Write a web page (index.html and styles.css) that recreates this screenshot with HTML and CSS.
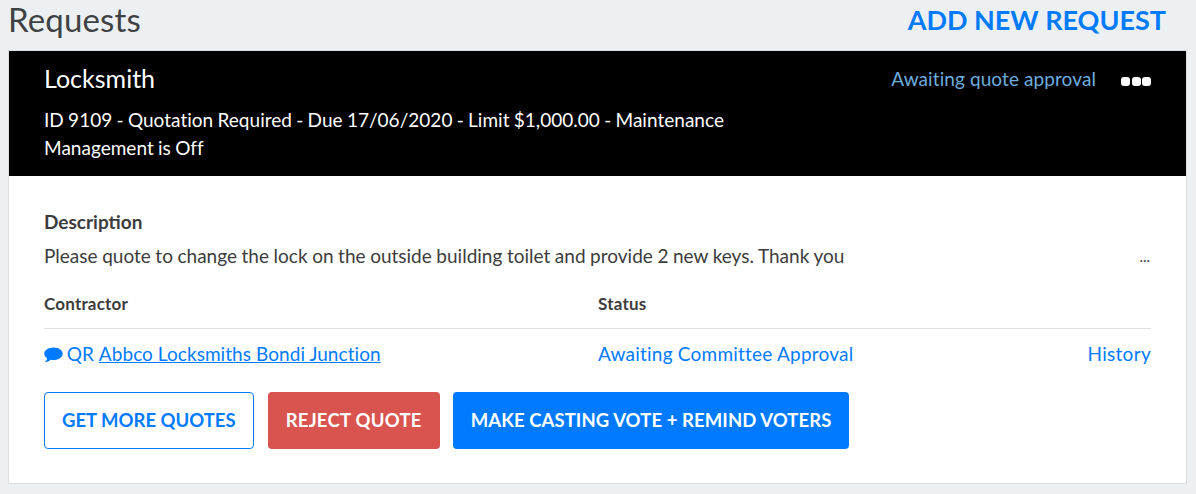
FILE: index.html
```html
<!DOCTYPE html>
<html lang="en">
<head>
<meta charset="utf-8">
<title>Requests</title>
<link rel="stylesheet" href="styles.css">
</head>
<body>
<header class="page-head">
  <h1 class="page-title">Requests</h1>
  <a class="add-link" href="#">ADD NEW REQUEST</a>
</header>
<section class="card">
  <div class="card-head">
    <div class="head-main">
      <h2 class="job-title">Locksmith</h2>
      <p class="job-meta">ID 9109 - Quotation Required - Due 17/06/2020 - Limit $1,000.00 - Maintenance Management is Off</p>
    </div>
    <div class="head-side">
      <span class="head-status">Awaiting quote approval</span>
      <span class="dots"><i></i><i></i><i></i></span>
    </div>
  </div>
  <div class="card-body">
    <h3 class="desc-title">Description</h3>
    <div class="desc-row">
      <p class="desc-text">Please quote to change the lock on the outside building toilet and provide 2 new keys. Thank you</p>
      <span class="more">...</span>
    </div>
    <div class="table-head">
      <span class="col-a">Contractor</span>
      <span class="col-b">Status</span>
    </div>
    <div class="table-row">
      <span class="col-a contractor">
        <svg class="chat" viewBox="0 0 20 16" aria-hidden="true"><path d="M10 0C4.600 0 .3 2.900.3 6.600c0 1.900 1.100 3.600 3 4.800-.2 1.300-1 2.600-2.400 4.200 2.300-.2 4.600-1.200 6.200-2.600.9.2 1.900.3 2.900.3 5.400 0 9.700-3 9.700-6.700S15.400 0 10 0z"/></svg>
        QR <a href="#">Abbco Locksmiths Bondi Junction</a>
      </span>
      <span class="col-b status-cell">Awaiting Committee Approval</span>
      <span class="history">History</span>
    </div>
    <div class="actions">
      <button class="btn btn-outline">GET MORE QUOTES</button>
      <button class="btn btn-red">REJECT QUOTE</button>
      <button class="btn btn-blue">MAKE CASTING VOTE + REMIND VOTERS</button>
    </div>
  </div>
</section>
</body>
</html>
```
FILE: styles.css
```css
* { box-sizing: border-box; }
html, body { margin: 0; padding: 0; }
body {
  width: 1196px;
  height: 494px;
  overflow: hidden;
  background: #edf0f3;
  font-family: Lato, sans-serif;
  font-size: 19px;
  line-height: 28px;
  color: #3c3c3c;
}
.page-head {
  height: 50px;
  padding: 0 30px 0 8px;
  display: flex;
  justify-content: space-between;
  align-items: flex-start;
}
.page-title {
  margin: 0;
  font-size: 33px;
  line-height: 38px;
  font-weight: 400;
  letter-spacing: .15px;
  color: #3f4244;
}
.add-link {
  font-size: 27px;
  line-height: 40px;
  font-weight: 700;
  color: #007bff;
  text-decoration: none;
}
.card {
  margin-left: 8px;
  width: 1179px;
  height: 434px;
  background: #fff;
  border: 1px solid #dcdfe2;
}
.card-head {
  background: #000;
  height: 125px;
  padding: 11px 35px 0;
  display: flex;
  justify-content: space-between;
  color: #fff;
}
.head-main { width: 710px; }
.job-title {
  margin: 0;
  font-size: 25px;
  line-height: 32px;
  font-weight: 400;
}
.job-meta {
  margin: 12px 0 0;
  word-spacing: -.6px;
  letter-spacing: .02px;
}
.head-side {
  display: flex;
  align-items: flex-start;
  padding-top: 3px;
  margin-right: -1px;
}
.head-status { color: #6caddf; letter-spacing: .09px; }
.dots {
  display: flex;
  gap: 1.5px;
  margin: 12px 1px 0 25px;
}
.dots i {
  width: 9px;
  height: 9px;
  background: #fff;
  border-radius: 3px;
}
.card-body { padding: 32px 35px 0; }
.desc-title {
  margin: 0;
  font-size: 19px;
  line-height: 28px;
  font-weight: 700;
  color: #3c3c3c;
}
.desc-row {
  margin-top: 6px;
  display: flex;
  justify-content: space-between;
}
.desc-text { margin: 0; word-spacing: -.28px; }
.more { font-size: 15px; padding-right: 1px; }
.table-head {
  margin-top: 20px;
  height: 39px;
  display: flex;
  font-size: 17px;
  letter-spacing: .2px;
  font-weight: 700;
  border-bottom: 1px solid #dee2e6;
}
.col-a { width: 554px; }
.col-b { flex: 1; }
.table-row {
  height: 50px;
  padding-top: 11px;
  display: flex;
  color: #007bff;
}
.contractor a { color: #007bff; letter-spacing: .06px; }
.status-cell { letter-spacing: .22px; }
.history { letter-spacing: .3px; }
.chat {
  width: 19px;
  height: 16px;
  margin-right: -1px;
  fill: #007bff;
  vertical-align: -2px;
}
.actions {
  margin-top: 13px;
  display: flex;
  gap: 13px;
}
.actions .btn-red { margin-left: 1px; }
.btn {
  height: 57px;
  padding: 0 17px 2px;
  border-radius: 4px;
  font-family: Lato, sans-serif;
  font-size: 18.5px;
  font-weight: 700;
  border: 1px solid transparent;
}
.btn-outline { background: #fff; color: #007bff; border-color: #007bff; }
.btn-red { background: #d9534f; color: #fff; letter-spacing: .25px; }
.btn-blue { background: #007bff; color: #fff; letter-spacing: .08px; }
```
